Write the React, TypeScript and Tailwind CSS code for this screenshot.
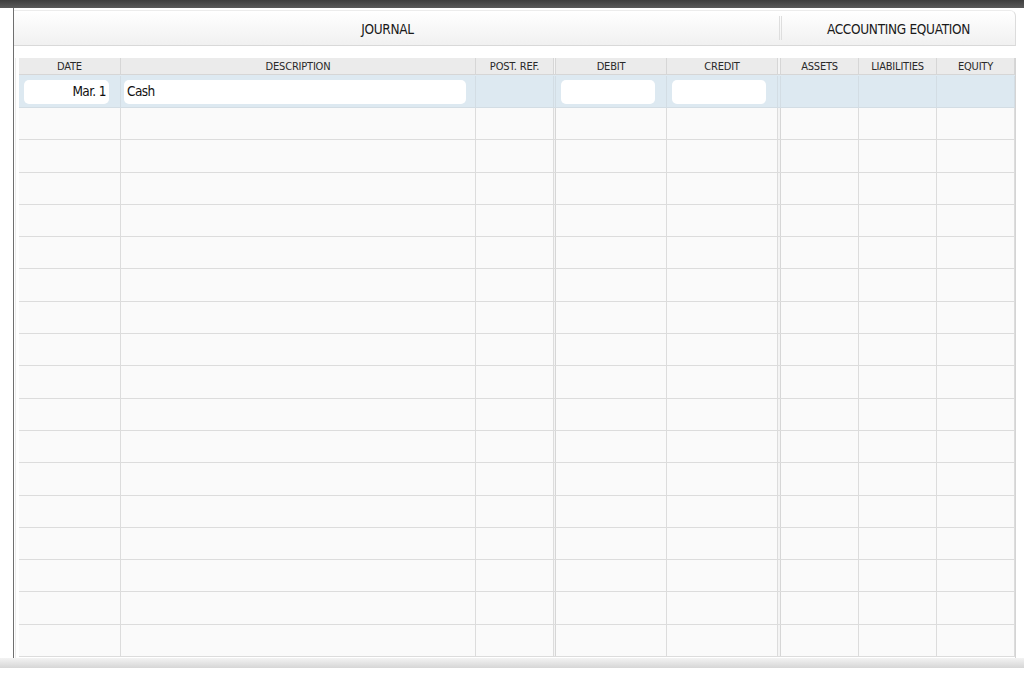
import React from "react";

type Col = { key: string; label: string; w: string };

const journalCols: Col[] = [
  { key: "date", label: "DATE", w: "w-[102px]" },
  { key: "desc", label: "DESCRIPTION", w: "w-[355px]" },
  { key: "ref", label: "POST. REF.", w: "w-[78px]" },
];
const amountCols: Col[] = [
  { key: "debit", label: "DEBIT", w: "w-[111px]" },
  { key: "credit", label: "CREDIT", w: "w-[111px]" },
];
const equationCols: Col[] = [
  { key: "assets", label: "ASSETS", w: "w-[78px]" },
  { key: "liab", label: "LIABILITIES", w: "w-[78px]" },
  { key: "equity", label: "EQUITY", w: "w-[78px]" },
];

const emptyRows = Array.from({ length: 17 }, (_, i) => i);

const HeaderCell = ({ col }: { col: Col }) => (
  <div className={`${col.w} shrink-0 h-full flex items-center justify-center pt-[3px] border-r border-[#d6d6d6] text-[11px] tracking-[-0.2px] text-[#2a2a2a]`}>
    {col.label}
  </div>
);

const Sep = ({ w }: { w: string }) => <div className={`${w} shrink-0 h-full bg-[#f4f4f4] border-r border-[#d6d6d6]`} />;

const EmptyRow = () => (
  <div className="flex h-[32.3px] border-b border-[#dcdcdc] bg-[#fafafa]">
    {journalCols.map((c) => (
      <div key={c.key} className={`${c.w} shrink-0 h-full border-r border-[#dcdcdc]`} />
    ))}
    <Sep w="w-[2px]" />
    {amountCols.map((c) => (
      <div key={c.key} className={`${c.w} shrink-0 h-full border-r border-[#dcdcdc]`} />
    ))}
    <Sep w="w-[3px]" />
    {equationCols.map((c) => (
      <div key={c.key} className={`${c.w} shrink-0 h-full border-r border-[#dcdcdc]`} />
    ))}
  </div>
);

export default function App() {
  return (
    <div
      className="w-[1024px] h-[675px] bg-white overflow-hidden flex flex-col"
      style={{ fontFamily: "'DejaVu Sans Condensed', Lato, sans-serif" }}
    >
      <div className="h-[8px] shrink-0 bg-gradient-to-b from-[#3e3e3e] to-[#5a5a5a]" />
      <div className="flex h-[650px] shrink-0">
        <div className="w-[13px] shrink-0" />
        <div className="w-[1003px] shrink-0 border-l border-[#6f6f6f] flex flex-col">
          {/* panel header */}
          <div className="mt-[2px] h-[36px] shrink-0 flex border-b border-[#d9d9d9] border-r border-t border-t-[#ececec] border-r-[#dcdcdc] rounded-tr-[6px] bg-gradient-to-b from-white to-[#f1f1f1]">
            <div className="w-[765px] shrink-0 flex items-center justify-center pt-[3px] pr-[18px] text-[13.5px] tracking-[-0.3px] text-[#1a1a1a]">
              JOURNAL
            </div>
            <div className="w-[3px] shrink-0 my-[5px] border-l border-r border-[#dedede]" />
            <div className="flex-1 flex items-center justify-center pt-[3px] text-[13.5px] tracking-[-0.3px] text-[#1a1a1a]">
              ACCOUNTING EQUATION
            </div>
          </div>
          <div className="h-[12px] shrink-0" />
          {/* table */}
          <div className="flex-1 flex flex-col pl-[3px] border-l border-[#ececec] ml-[1px] border-r border-r-[#d4d4d4]">
            <div className="flex h-[17px] shrink-0 bg-[#ebebeb] border-b border-[#d6d6d6]">
              {journalCols.map((c) => (
                <HeaderCell key={c.key} col={c} />
              ))}
              <Sep w="w-[2px]" />
              {amountCols.map((c) => (
                <HeaderCell key={c.key} col={c} />
              ))}
              <Sep w="w-[3px]" />
              {equationCols.map((c) => (
                <HeaderCell key={c.key} col={c} />
              ))}
            </div>
            {/* active row */}
            <div className="flex h-[33px] shrink-0 bg-[#dde9f1] border-b border-[#d3dde4] pt-[1px]">
              <div className="w-[102px] shrink-0 h-full border-r border-[#d3dde4] flex items-center pl-[5px] pr-[11px]">
                <div className="w-full h-[24px] bg-white rounded-[5px] flex items-center justify-end pr-[3px] text-[13.5px] tracking-[-0.6px] text-[#111]">
                  Mar. 1
                </div>
              </div>
              <div className="w-[355px] shrink-0 h-full border-r border-[#d3dde4] flex items-center pl-[3px] pr-[9px]">
                <div className="w-full h-[24px] bg-white rounded-[5px] flex items-center pl-[3px] text-[13.5px] tracking-[-0.6px] text-[#111]">
                  Cash
                </div>
              </div>
              <div className="w-[78px] shrink-0 h-full border-r border-[#d3dde4]" />
              <div className="w-[2px] shrink-0 h-full border-r border-[#d3dde4]" />
              <div className="w-[111px] shrink-0 h-full border-r border-[#d3dde4] flex items-center pl-[5px] pr-[11px]">
                <div className="w-full h-[24px] bg-white rounded-[5px]" />
              </div>
              <div className="w-[111px] shrink-0 h-full border-r border-[#d3dde4] flex items-center pl-[5px] pr-[11px]">
                <div className="w-full h-[24px] bg-white rounded-[5px]" />
              </div>
              <div className="w-[3px] shrink-0 h-full border-r border-[#d3dde4]" />
              {equationCols.map((c) => (
                <div key={c.key} className={`${c.w} shrink-0 h-full border-r border-[#d3dde4]`} />
              ))}
            </div>
            {emptyRows.map((r) => (
              <EmptyRow key={r} />
            ))}
          </div>
        </div>
      </div>
      <div className="h-[10px] shrink-0 bg-gradient-to-b from-[#f3f3f3] to-[#d6d6d6]" />
    </div>
  );
}
